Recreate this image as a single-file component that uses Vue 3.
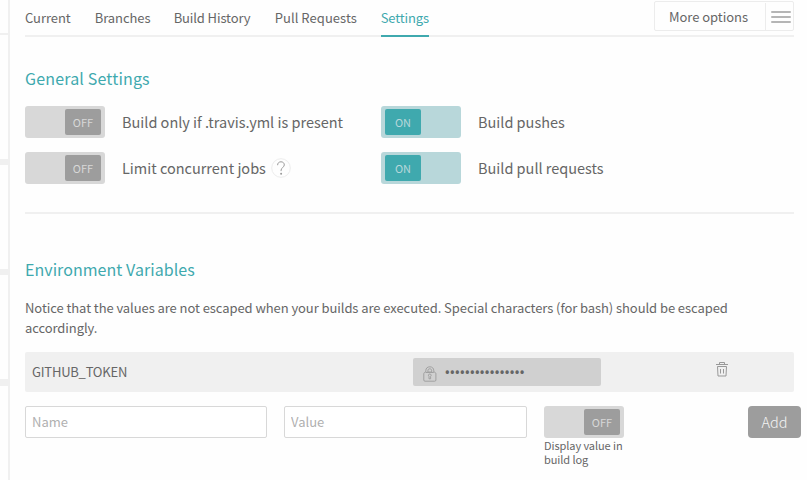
<script setup>
import { ref } from 'vue'

const tabs = ['Current', 'Branches', 'Build History', 'Pull Requests', 'Settings']
const active = ref('Settings')
const settings = ref([
  { label: 'Build only if .travis.yml is present', on: false },
  { label: 'Build pushes', on: true },
  { label: 'Limit concurrent jobs', on: false, help: true },
  { label: 'Build pull requests', on: true },
])
const display = ref(false)
const mask = '•'.repeat(16)
</script>

<template>
  <div class="page">
    <aside class="side">
      <div class="s1"></div>
      <div class="s2"></div>
      <div class="s3"></div>
      <div class="s4"></div>
    </aside>
    <main class="main">
      <header class="top">
        <nav class="tabs">
          <a v-for="t in tabs" :key="t" class="tab" :class="{ active: t === active }" @click="active = t">{{ t }}</a>
        </nav>
        <button class="more">
          <span class="more-label">More options</span>
          <span class="burger"><i></i><i></i><i></i></span>
        </button>
      </header>

      <section class="general">
        <h2>General Settings</h2>
        <div class="grid">
          <div v-for="s in settings" :key="s.label" class="setting">
            <button class="switch" :class="{ on: s.on }" @click="s.on = !s.on">
              <span class="knob">{{ s.on ? 'ON' : 'OFF' }}</span>
            </button>
            <span class="label">{{ s.label }}</span>
            <span v-if="s.help" class="help">
              <svg width="20" height="20" viewBox="0 0 20 20" fill="none">
                <circle cx="10" cy="10" r="9.3" stroke="#ececec" />
                <path d="M6.6 7.2C6.6 5 8 3.8 10 3.8s3.3 1.3 3.3 3.1c0 2.5-3.2 2.7-3.2 5.2v1" stroke="#999" stroke-width="1" />
                <circle cx="10.1" cy="15.8" r="1" fill="#999" />
              </svg>
            </span>
          </div>
        </div>
      </section>

      <section class="env">
        <h2>Environment Variables</h2>
        <p class="notice">Notice that the values are not escaped when your builds are executed. Special characters (for bash) should be escaped accordingly.</p>
        <div class="var">
          <span class="var-name">GITHUB_TOKEN</span>
          <div class="secret">
            <svg width="14" height="16" viewBox="0 0 14 16" fill="none" stroke="#a0a0a0">
              <path d="M2.8 6C1.4 6.2.8 6.8.8 8v6c0 .8.4 1.2 1.2 1.2h9.7c.8 0 1.2-.4 1.2-1.2V8c0-1.2-.6-1.8-2-2" />
              <path d="M2.8 6V4.8C2.8 2.2 4.4.8 6.8.8s4 1.4 4 4V6M4.9 6V4.8c0-1.3.7-2 1.9-2s1.9.7 1.9 2V6zM2.8 6.5h8" />
              <path d="M6.8 8c-1.6 0-1.7 1.8-.8 2.4v2.4h1.6v-2.4C8.5 9.8 8.4 8 6.8 8z" />
            </svg>
            <span class="dots">{{ mask }}</span>
          </div>
          <svg class="trash" width="12" height="16" viewBox="0 0 12 16" fill="none" stroke="#999">
            <path d="M0 3.5h12" />
            <path d="M3.5 3V1.5h5V3M1.5 5.500h9L10 15H2zM4.500 8v4.500M7.500 8v4.500" />
          </svg>
        </div>
        <form class="form" @submit.prevent>
          <input class="name" placeholder="Name" />
          <input class="value" placeholder="Value" />
          <div class="display">
            <button type="button" class="switch" :class="{ on: display }" @click="display = !display">
              <span class="knob">{{ display ? 'ON' : 'OFF' }}</span>
            </button>
            <span class="caption">Display value in build log</span>
          </div>
          <button class="add">Add</button>
        </form>
      </section>
    </main>
  </div>
</template>

<style>
body { margin: 0; background: #fff; overflow: hidden; }
</style>

<style scoped>
* { box-sizing: border-box; }
.page { display: flex; width: 807px; height: 480px; overflow: hidden; background: #fefefe; color: #666; font-family: "Noto Sans CJK SC", "Noto Sans", sans-serif; font-size: 13px; }
button, input { font-family: inherit; margin: 0; padding: 0; border: 0; }
.side { width: 10px; height: 480px; flex: none; border-right: 2px solid #f0f0f0; }
.side div { background: #f0f0f0; }
.s1 { height: 2px; margin-top: 33px; }
.s2 { height: 6px; margin-top: 124px; }
.s3 { height: 6px; margin-top: 104px; }
.s4 { height: 7px; margin-top: 104px; }
.main { width: 797px; padding-left: 15px; }
.top { display: flex; justify-content: space-between; width: 769px; height: 37px; border-bottom: 2px solid #f0f0f0; }
.tabs { display: flex; gap: 24px; height: 37px; }
.tab { height: 37px; line-height: 36px; font-size: 13px; letter-spacing: -.055px; white-space: nowrap; cursor: pointer; }
.tab:nth-child(3) { width: 77px; letter-spacing: -.12px; }
.tab:nth-child(4) { width: 82px; letter-spacing: .06px; }
.tab:nth-child(2) { width: 55px; }
.tab.active { width: 48px; letter-spacing: -.12px; color: #3fa9ae; border-bottom: 2px solid #3fa9ae; }
.more { display: flex; width: 140px; height: 30px; margin-top: 1px; border: 1px solid #ececec; border-radius: 2px; background: #fefefe; color: #666; }
.more-label { width: 110px; padding-left: 14px; text-align: left; line-height: 29px; font-size: 13px; letter-spacing: -.04px; white-space: nowrap; }
.burger { display: flex; flex-direction: column; gap: 3px; width: 28px; height: 27px; margin-top: 1px; padding: 8px 0 0 5px; border-left: 1px solid #ececec; }
.burger i { width: 20px; height: 2px; background: #b5b5b5; border-radius: 1px; }
.general { width: 769px; height: 177px; padding-top: 29px; border-bottom: 2px solid #f0f0f0; }
h2 { margin: 0; height: 24px; line-height: 24px; font-size: 16px; font-weight: 400; color: #3fa9ae; }
.general h2 { letter-spacing: .17px; }
.env h2 { letter-spacing: .05px; }
.grid { display: grid; grid-template-columns: 356px 1fr; gap: 14px 0; margin-top: 16px; }
.setting { display: flex; align-items: center; height: 32px; }
.switch { display: flex; justify-content: flex-end; flex: none; width: 80px; height: 32px; padding: 3px 4px; border-radius: 3px; background: #d8d8d8; }
.switch.on { justify-content: flex-start; background: #b8d7da; }
.knob { width: 36px; height: 26px; border-radius: 2px; background: #9d9d9d; color: #d8d8d8; font-size: 11px; font-weight: 400; line-height: 26px; text-align: center; }
.on .knob { background: #3fa9ae; color: #b8d7da; }
.label { margin-left: 17px; font-size: 14.5px; letter-spacing: -.01px; line-height: 32px; white-space: nowrap; }
.help { height: 20px; margin-left: 5.5px; }
.env { padding-top: 43px; }
.notice { width: 740px; margin: 17px 0 0; line-height: 20px; font-size: 13px; letter-spacing: -.072px; }
.var { display: flex; width: 769px; height: 40px; margin-top: 14px; padding: 6px 0 0 7px; border-radius: 2px; background: #f0f0f0; }
.var-name { width: 381px; line-height: 28px; font-size: 13px; letter-spacing: -.22px; }
.secret { display: flex; flex: none; width: 188px; height: 28px; padding: 8px 0 0 10px; background: #d0d0d0; border-radius: 2px; }
.dots { margin-left: 7.5px; height: 12px; font-family: "Noto Sans", sans-serif; font-size: 15px; letter-spacing: -.66px; line-height: 12px; white-space: nowrap; }
.trash { margin: 3px 0 0 115px; }
.form { display: flex; margin-top: 14px; }
input { height: 32px; border: 1px solid #d8d8d8; border-radius: 2px; padding: 0 0 2px 6px; background: #fff; color: #666; font-size: 13px; }
input::placeholder { color: #b0b0b0; opacity: 1; }
.name { width: 242px; }
.value { width: 243px; margin-left: 17px; }
.display { display: flex; flex-direction: column; width: 90px; margin-left: 17px; }
.caption { width: 84px; font-size: 11px; line-height: 14px; letter-spacing: -.08px; }
.add { width: 53px; height: 32px; margin-left: 114px; border-radius: 4px; background: #9d9d9d; color: #f4f4f4; font-size: 14.5px; font-weight: 300; line-height: 30px; }
</style>
